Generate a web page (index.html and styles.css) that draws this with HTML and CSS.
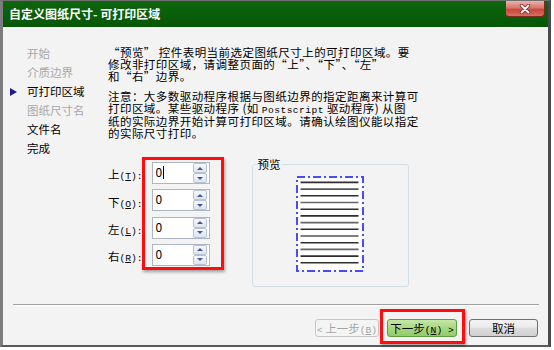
FILE: index.html
```
<!DOCTYPE html>
<html lang="zh-CN">
  <head>
    <meta charset="UTF-8" />
    <title>自定义图纸尺寸- 可打印区域</title>
    <link rel="stylesheet" href="styles.css">
  </head>

  <body>
    <div class="window">
      <div class="titlebar">
        <span class="title">自定义图纸尺寸- 可打印区域</span>
        <div class="close-btn">
          <svg width="12" height="10" viewBox="0 0 12 10">
            <path d="M2.5 1.5 L9.5 8.5 M9.5 1.5 L2.5 8.5" stroke="#6a2a26" stroke-width="3.4" stroke-linecap="round" />
            <path d="M2.5 1.5 L9.5 8.5 M9.5 1.5 L2.5 8.5" stroke="#fff" stroke-width="1.8" stroke-linecap="round" />
          </svg>
        </div>
      </div>

      <div class="content">
        <div class="main">
          <ul class="nav">
            <li class="nav-item"><span class="marker"></span>开始</li>
            <li class="nav-item"><span class="marker"></span>介质边界</li>
            <li class="nav-item active current"><span class="marker"></span>可打印区域</li>
            <li class="nav-item"><span class="marker"></span>图纸尺寸名</li>
            <li class="nav-item active"><span class="marker"></span>文件名</li>
            <li class="nav-item active"><span class="marker"></span>完成</li>
          </ul>

          <div class="pane">
            <p class="info">“预览” 控件表明当前选定图纸尺寸上的可打印区域。要<br>修改非打印区域，请调整页面的“上”、“下”、“左”<br>和“右”边界。</p>
            <p class="info note">注意：大多数驱动程序根据与图纸边界的指定距离来计算可<br>打印区域。某些驱动程序 (如 <span class="hw">Postscript</span> 驱动程序) 从图<br>纸的实际边界开始计算可打印区域。请确认绘图仪能以指定<br>的实际尺寸打印。</p>

            <div class="settings">
              <div class="labels">
                <span>上<span class="hw">(<u>T</u>):</span></span>
                <span>下<span class="hw">(<u>O</u>):</span></span>
                <span>左<span class="hw">(<u>L</u>):</span></span>
                <span>右<span class="hw">(<u>R</u>):</span></span>
              </div>

              <div class="spin-box">
                <div class="spin">
                  <span class="spin-value">0<span class="caret"></span></span>
                  <span class="spin-arrows"><span class="arrow-btn up"></span><span class="arrow-btn down"></span></span>
                </div>
                <div class="spin">
                  <span class="spin-value">0</span>
                  <span class="spin-arrows"><span class="arrow-btn up"></span><span class="arrow-btn down"></span></span>
                </div>
                <div class="spin">
                  <span class="spin-value">0</span>
                  <span class="spin-arrows"><span class="arrow-btn up"></span><span class="arrow-btn down"></span></span>
                </div>
                <div class="spin">
                  <span class="spin-value">0</span>
                  <span class="spin-arrows"><span class="arrow-btn up"></span><span class="arrow-btn down"></span></span>
                </div>
              </div>

              <fieldset class="preview">
                <legend>预览</legend>
                <svg class="paper" width="68" height="96" viewBox="0 0 68 96">
                  <rect x="1" y="1" width="66" height="94" fill="#fff" stroke="#4b4bf5" stroke-width="2" stroke-dasharray="8 3 2 3" />
                  <g stroke-width="1.6">
                    <line x1="4.5" y1="6.4" x2="62.5" y2="6.4" stroke="#2e2e2e" />
                    <line x1="4.5" y1="13.1" x2="62.5" y2="13.1" stroke="#555" />
                    <line x1="4.5" y1="19.8" x2="62.5" y2="19.8" stroke="#2e2e2e" />
                    <line x1="4.5" y1="26.5" x2="62.5" y2="26.5" stroke="#666" />
                    <line x1="4.5" y1="33.2" x2="62.5" y2="33.2" stroke="#2e2e2e" />
                    <line x1="4.5" y1="39.9" x2="62.5" y2="39.9" stroke="#2e2e2e" />
                    <line x1="4.5" y1="46.6" x2="62.5" y2="46.6" stroke="#666" />
                    <line x1="4.5" y1="53.3" x2="62.5" y2="53.3" stroke="#2e2e2e" />
                    <line x1="4.5" y1="60" x2="62.5" y2="60" stroke="#555" />
                    <line x1="4.5" y1="66.7" x2="62.5" y2="66.7" stroke="#2e2e2e" />
                    <line x1="4.5" y1="73.4" x2="62.5" y2="73.4" stroke="#666" />
                    <line x1="4.5" y1="80.1" x2="62.5" y2="80.1" stroke="#2e2e2e" />
                    <line x1="4.5" y1="86.8" x2="62.5" y2="86.8" stroke="#2e2e2e" />
                  </g>
                </svg>
              </fieldset>
            </div>
          </div>
        </div>

        <div class="footer">
          <div class="separator"></div>
          <div class="buttons">
            <button type="button" class="btn disabled"><span class="hw">&lt;</span> 上一步<span class="hw">(<u>B</u>)</span></button>
            <div class="highlight">
              <button type="button" class="btn next">下一步<span class="hw">(<u>N</u>) &gt;</span></button>
            </div>
            <button type="button" class="btn cancel">取消</button>
          </div>
        </div>
      </div>
    </div>
  </body>
</html>
```

FILE: styles.css
```
* {
  margin: 0;
  padding: 0;
  box-sizing: border-box;
}

body {
  width: 554px;
  height: 350px;
  overflow: hidden;
  background: #fff;
  font-family: "Noto Sans CJK SC", "Noto Sans", sans-serif;
  font-size: 11.5px;
  color: #000;
}

.hw {
  font-family: "Liberation Mono", monospace;
  font-size: 9.6px;
  line-height: 1;
}

.window {
  width: 551px;
  height: 347px;
  display: flex;
  flex-direction: column;
  border-top: 1px solid #6e6e6e;
  border-left: 3px solid #7c7c7c;
  border-right: 3px solid #4a4a4a;
  border-bottom: 2px solid #5a5a5a;
}

.titlebar {
  height: 26px;
  display: flex;
  justify-content: space-between;
  align-items: flex-start;
  padding: 0 3px 0 6px;
  background: linear-gradient(#0d660d, #075707);
}

.title {
  color: #fff;
  font-weight: bold;
  font-size: 12px;
  line-height: 26px;
}

.close-btn {
  width: 40px;
  height: 16px;
  display: flex;
  align-items: center;
  justify-content: center;
  border: 1px solid #7a2a22;
  border-top: none;
  border-radius: 0 0 4px 4px;
  background: linear-gradient(#ebb3ab, #d9756c 45%, #c6473a 58%, #da6f63);
}

.content {
  flex: 1;
  display: flex;
  flex-direction: column;
  background: #f3f3f3;
}

.main {
  display: flex;
  padding-top: 17px;
}

/* left step list */
.nav {
  list-style: none;
  width: 105px;
  padding-left: 7px;
}

.nav-item {
  display: flex;
  align-items: center;
  height: 19px;
  line-height: 19px;
  color: #a8a8a8;
}

.nav-item.active {
  color: #000;
}

.marker {
  width: 17px;
}

.current .marker::before {
  content: "";
  display: block;
  width: 0;
  height: 0;
  border-left: 7px solid #1c1c8c;
  border-top: 4.5px solid transparent;
  border-bottom: 4.5px solid transparent;
}

/* right pane */
.pane {
  padding-top: 2px;
}

.info {
  line-height: 12px;
  letter-spacing: 0.45px;
  white-space: nowrap;
}

.note {
  margin-top: 7.5px;
}

.settings {
  display: flex;
  align-items: flex-start;
  margin-top: 17.5px;
}

.labels {
  width: 34px;
  padding-top: 6.8px;
  display: flex;
  flex-direction: column;
  gap: 5.3px;
}

.labels > span {
  height: 22px;
  line-height: 22px;
  white-space: nowrap;
}

.spin-box {
  display: flex;
  flex-direction: column;
  gap: 5.3px;
  padding: 2.5px 11.5px 1.5px 6.5px;
  border: 3px solid #ff0d0d;
  box-shadow: 1px 2px 3px rgba(0, 0, 0, 0.35);
}

.spin {
  width: 58px;
  height: 22px;
  display: flex;
  justify-content: space-between;
  padding: 0 2px 0 3px;
  background: #fff;
  border: 1px solid #abb7c4;
}

.spin-value {
  display: flex;
  align-items: center;
  height: 17px;
  font-size: 12px;
  line-height: 16px;
  padding-top: 1px;
}

.caret {
  width: 1px;
  height: 13px;
  margin-left: 1px;
  background: #000;
}

.spin-arrows {
  width: 14px;
  display: flex;
  flex-direction: column;
}

.arrow-btn {
  height: 10px;
  display: flex;
  align-items: center;
  justify-content: center;
  border: 1px solid #b6c2d0;
  border-radius: 2px;
  background: linear-gradient(#f6f8fb, #dfe5ee);
}

.arrow-btn::before {
  content: "";
  width: 0;
  height: 0;
  border-left: 3px solid transparent;
  border-right: 3px solid transparent;
}

.up::before {
  border-bottom: 3px solid #46569c;
}

.down::before {
  border-top: 3px solid #46569c;
}

.preview {
  width: 157px;
  min-width: 0;
  margin: 1.7px 0 0 27.5px;
  padding: 5.5px 0 14px;
  border: 1px solid #d3dde5;
  border-radius: 3px;
}

.preview legend {
  margin-left: 4px;
  padding: 0 1px;
  line-height: 12px;
}

.paper {
  display: block;
  margin: 0 auto;
}

/* bottom buttons */
.footer {
  margin-top: auto;
}

.separator {
  height: 2px;
  margin: 0 9px 0 10px;
  border-top: 1px solid #a0a0a0;
  border-bottom: 1px solid #fff;
}

.buttons {
  display: flex;
  justify-content: flex-end;
  align-items: flex-start;
  padding: 2.5px 10px 1.5px 0;
}

.btn {
  height: 18px;
  margin-top: 10px;
  font-family: inherit;
  font-size: 11.5px;
  line-height: 16px;
  color: #000;
  border: 1px solid #707070;
  border-radius: 3px;
  background: linear-gradient(#f3f3f3, #ebebeb 45%, #dddddd 50%, #d0d0d0);
}

.btn.disabled {
  width: 64px;
  margin-right: 1px;
  color: #a4a4a4;
  border-color: #c6c6c6;
  background: #f4f4f4;
}

.highlight {
  margin-right: 4px;
  padding: 7px 5px 4px 4px;
  border: 3px solid #ff0d0d;
  box-shadow: 1px 2px 3px rgba(0, 0, 0, 0.35);
}

.btn.next {
  width: 70px;
  margin-top: 0;
  border-color: #5f9c40;
  background: linear-gradient(#c4e8a6, #a8d882 50%, #92cb6a);
}

.btn.cancel {
  width: 69px;
}
```
